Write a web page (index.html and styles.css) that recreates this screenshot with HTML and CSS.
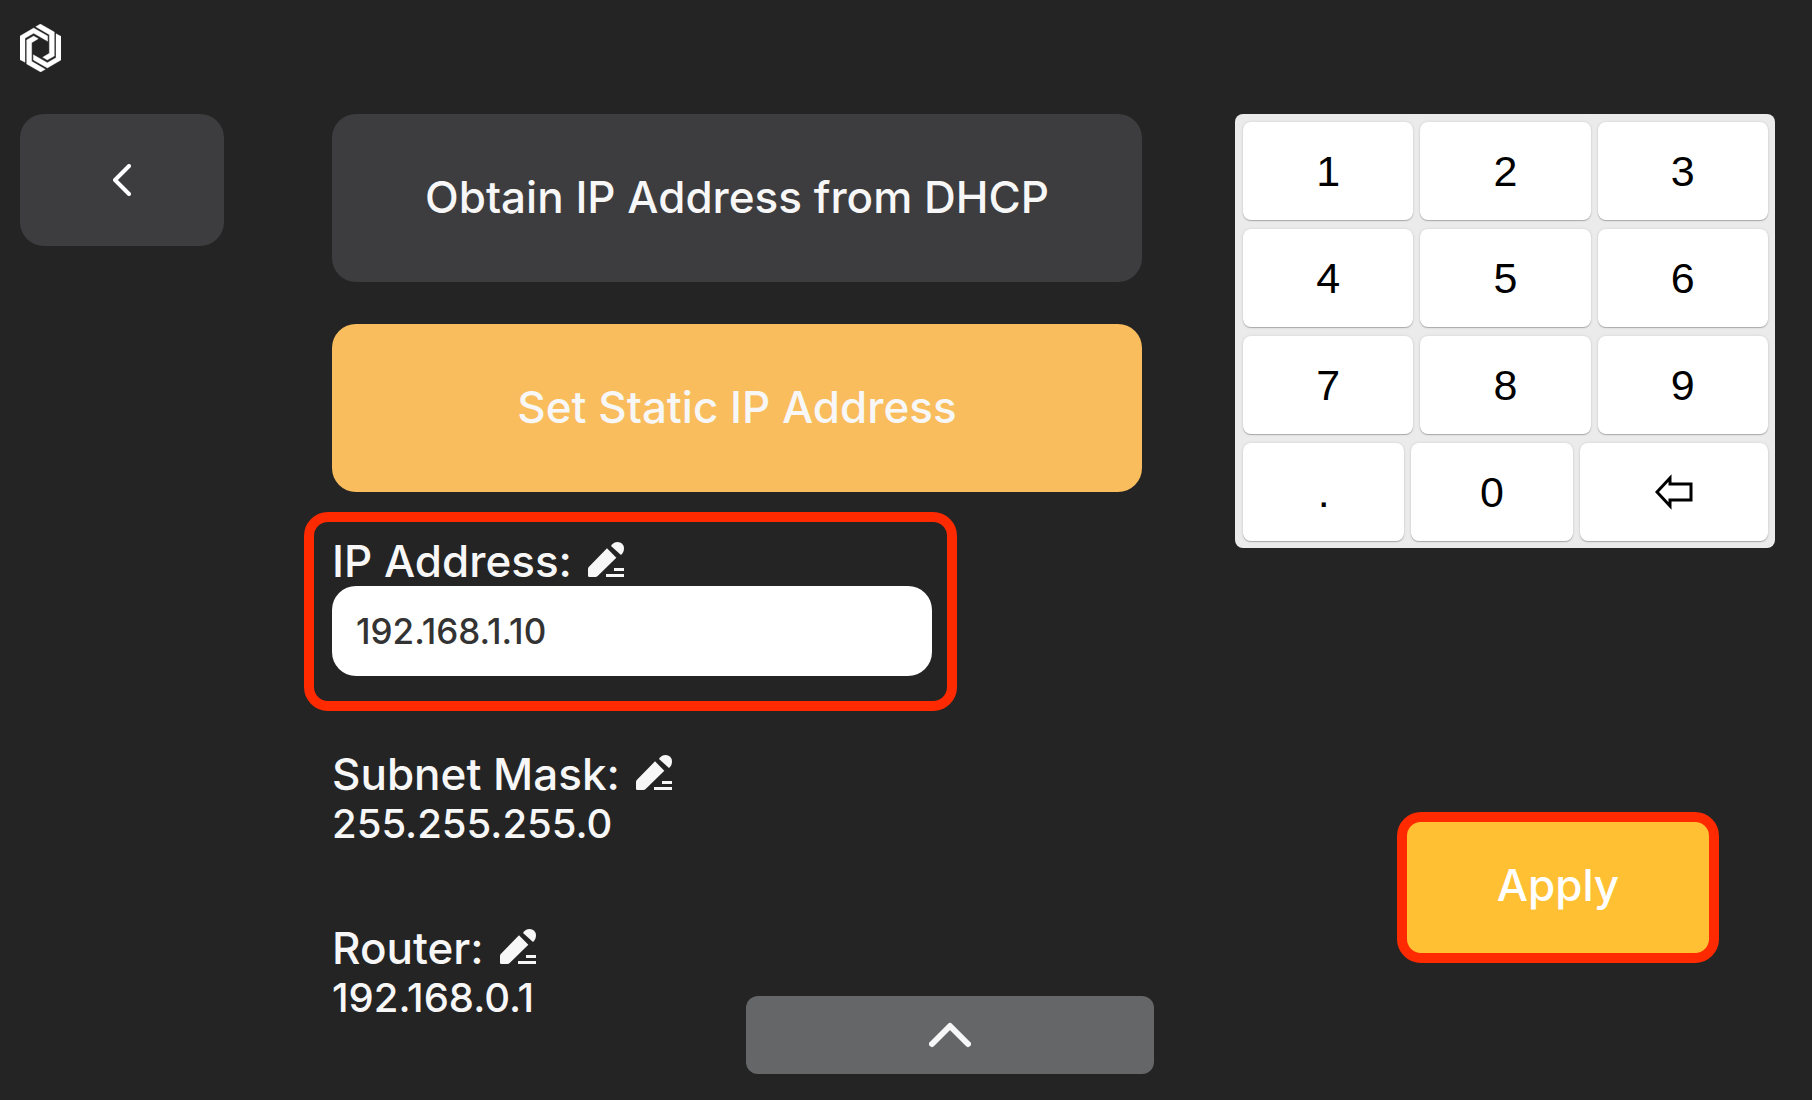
FILE: index.html
```html
<!DOCTYPE html>
<html lang="en">
<head>
<meta charset="utf-8">
<meta name="viewport" content="width=device-width, initial-scale=1">
<title>Network settings</title>
<link rel="stylesheet" href="styles.css">
</head>
<body>
<svg class="sprite" aria-hidden="true">
  <symbol id="pencil" viewBox="888 126 108 105">
    <path d="M945 145 973 173 917 228Q914 231 910 231H892Q888 231 888 227V207Q888 203 891 200Z"/>
    <path d="M957 138C962 130 968 126 977 126A19 19 0 0 1 996 145C996 154 993 160 987 165Z"/>
    <path d="M966 204H996V213H966ZM942 222H996V231H942Z"/>
  </symbol>
</svg>
<header class="topbar">
  <a class="logo" href="#" aria-label="Home">
    <svg viewBox="60 72 123 144" aria-hidden="true">
      <path d="M60 108 101 84 143 108V124L101 100 75 115V187L60 179Z"/>
      <path d="M183 180 142 204 100 180V164L142 188 168 173V101L183 109Z"/>
      <path d="M107 80 121 72 163 96V168L142 180 128 172 148 160V104Z"/>
      <path d="M136 208 122 216 80 192V120L101 108 115 116 95 128V184Z"/>
    </svg>
  </a>
</header>
<main class="layout">
  <nav>
    <button class="back" type="button" aria-label="Back">
      <svg viewBox="0 0 18 32" aria-hidden="true"><path d="M16 2 2 16 16 30"/></svg>
    </button>
  </nav>
  <form class="settings" id="settings">
    <button class="mode" type="button">Obtain IP Address from DHCP</button>
    <button class="mode mode-active" type="button">Set Static IP Address</button>
    <div class="field-editing highlight">
      <div class="field-head">
        <label for="ip">IP Address:</label>
        <button class="edit" type="button" aria-label="Edit IP address"><svg><use href="#pencil"/></svg></button>
      </div>
      <input id="ip" type="text" inputmode="decimal" value="192.168.1.10">
    </div>
    <div class="field">
      <div class="field-head">
        <span>Subnet Mask:</span>
        <button class="edit" type="button" aria-label="Edit subnet mask"><svg><use href="#pencil"/></svg></button>
      </div>
      <div class="value">255.255.255.0</div>
    </div>
    <div class="field">
      <div class="field-head">
        <span>Router:</span>
        <button class="edit" type="button" aria-label="Edit router"><svg><use href="#pencil"/></svg></button>
      </div>
      <div class="value">192.168.0.1</div>
    </div>
  </form>
  <aside class="side">
    <div class="keypad">
      <div class="keys">
        <button type="button">1</button><button type="button">2</button><button type="button">3</button>
      </div>
      <div class="keys">
        <button type="button">4</button><button type="button">5</button><button type="button">6</button>
      </div>
      <div class="keys">
        <button type="button">7</button><button type="button">8</button><button type="button">9</button>
      </div>
      <div class="keys keys-last">
        <button type="button">.</button><button type="button">0</button>
        <button type="button" aria-label="Backspace">
          <svg viewBox="0 0 38 36" aria-hidden="true"><path d="M2 18 15 4V10H36V26H15V32Z"/></svg>
        </button>
      </div>
    </div>
    <button class="apply highlight" type="submit" form="settings">Apply</button>
  </aside>
</main>
<button class="drawer" type="button" aria-label="Open menu">
  <svg viewBox="0 0 42 26" aria-hidden="true"><path d="M3 22 21 4 39 22"/></svg>
</button>
</body>
</html>
```
FILE: styles.css
```css
* {
  box-sizing: border-box;
}

body {
  position: relative;
  min-height: 100vh;
  margin: 0;
  background: #242424;
  color: #f7f7f7;
  font: 500 44px/49px Inter, sans-serif;
}

button,
input {
  margin: 0;
  padding: 0;
  border: 0;
  font: inherit;
  color: inherit;
}

button {
  cursor: pointer;
}

svg {
  display: block;
}

.sprite {
  position: absolute;
  width: 0;
  height: 0;
}

.topbar {
  padding: 24px 20px 42px;
}

.logo {
  display: block;
  width: 41px;
}

.logo svg {
  width: 41px;
  height: 48px;
  fill: #fff;
  stroke: #fff;
  stroke-width: 1;
}

.layout {
  display: grid;
  grid-template-columns: 219px minmax(0, 3fr) minmax(0, 2fr);
  column-gap: 93px;
  padding: 0 37px 0 20px;
}

.back {
  display: grid;
  place-items: center;
  width: 204px;
  height: 132px;
  border-radius: 24px;
  background: #3d3d3f;
}

.back svg {
  width: 18px;
  height: 32px;
  fill: none;
  stroke: #fff;
  stroke-width: 4;
  stroke-linecap: round;
  stroke-linejoin: round;
}

.settings {
  display: flex;
  flex-direction: column;
}

.mode {
  height: 168px;
  padding-bottom: 2px;
  border-radius: 24px;
  background: #3d3d3f;
}

.mode-active {
  margin-top: 42px;
  background: #f9bd5e;
}

.highlight {
  border: 10px solid #ff2a00;
  border-radius: 24px;
}

.field-editing {
  width: 653px;
  margin: 20px 0 39px -28px;
  padding: 15px 15px 25px 18px;
}

.field-head {
  display: flex;
  align-items: center;
  gap: 16px;
}

.edit {
  background: none;
}

.edit svg {
  width: 36px;
  height: 35px;
  margin-bottom: 4px;
  fill: currentColor;
}

.field-editing input {
  display: block;
  width: 100%;
  height: 90px;
  padding: 0 24px;
  border-radius: 24px;
  background: #fff;
  color: #333;
  font-size: 35px;
}

.field + .field {
  margin-top: 76px;
}

.value {
  font-size: 40px;
}

.side {
  display: flex;
  flex-direction: column;
  align-items: flex-end;
}

.keypad {
  display: grid;
  gap: 9px;
  width: 100%;
  padding: 8px 7px 7px 8px;
  border-radius: 8px;
  background: #ebebeb;
}

.keys {
  display: grid;
  grid-template-columns: repeat(3, minmax(0, 1fr));
  gap: 7px;
}

.keys-last {
  grid-template-columns: 6fr 6fr 7fr;
}

.keys button {
  display: grid;
  place-items: center;
  height: 98px;
  border-radius: 8px;
  background: #fff;
  box-shadow: 0 1px 1px #aaa, 0 0 3px #d0d0d0;
  color: #000;
  font: 400 43px/49px "Liberation Sans", sans-serif;
}

.keys svg {
  width: 38px;
  height: 36px;
  fill: none;
  stroke: #000;
  stroke-width: 3;
}

.apply {
  width: 322px;
  height: 151px;
  margin: 264px 56px 0 0;
  padding-bottom: 4px;
  background: #ffc033;
  color: #fff;
}

.drawer {
  position: absolute;
  right: 0;
  bottom: 26px;
  left: 88px;
  display: grid;
  place-items: center;
  width: 408px;
  height: 78px;
  margin: 0 auto;
  border-radius: 12px;
  background: #656668;
}

.drawer svg {
  width: 42px;
  height: 26px;
  fill: none;
  stroke: #f7f7f7;
  stroke-width: 6;
  stroke-linecap: round;
  stroke-linejoin: round;
}
```
